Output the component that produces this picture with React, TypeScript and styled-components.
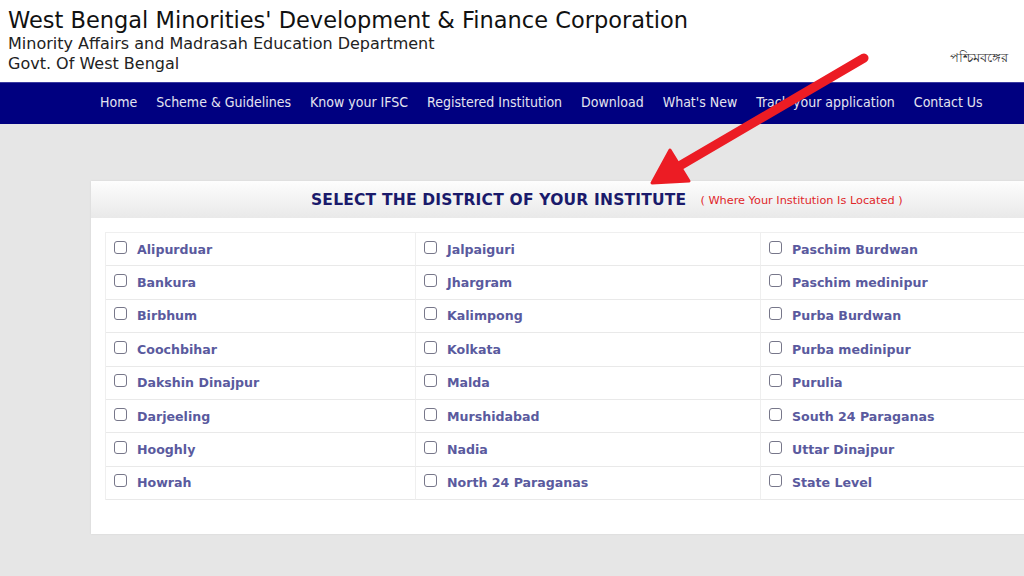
import React from "react";
import styled, { createGlobalStyle } from "styled-components";

const GlobalStyle = createGlobalStyle`
  html, body { margin: 0; padding: 0; overflow: hidden; background: #e6e6e6; }
  body { width: 1024px; height: 576px; font-family: "DejaVu Sans", Verdana, sans-serif; }
  #root { width: 1024px; height: 576px; overflow: hidden; }
`;

const Page = styled.div`
  position: relative;
  width: 1140px;
  height: 576px;
  background: #e6e6e6;
`;

const Header = styled.header`
  height: 82px;
  background: #ffffff;
  display: flex;
  justify-content: space-between;
  align-items: flex-start;
  padding: 0 0 0 8px;
  box-sizing: border-box;
`;

const Brand = styled.div`
  display: flex;
  flex-direction: column;
  padding-top: 6px;
`;

const Title = styled.h1`
  margin: 0;
  font-family: "DejaVu Sans", Verdana, sans-serif;
  font-weight: normal;
  font-size: 22.5px;
  line-height: 28px;
  color: #111;
`;

const SubLine = styled.div`
  font-family: "DejaVu Sans", Verdana, sans-serif;
  font-size: 16px;
  line-height: 20px;
  color: #222;
`;

const Tagline = styled.div`
  margin-top: 48px;
  width: 190px;
  font-family: "Noto Sans", "DejaVu Sans", sans-serif;
  font-size: 13px;
  color: #333;
  white-space: nowrap;
`;

const Nav = styled.nav`
  height: 42px;
  background: #000080;
  border-top: 1px solid #3a3aa0;
  box-sizing: border-box;
  display: flex;
  align-items: center;
  gap: 19px;
  padding: 0 0 3px 100px;
`;

const NavLink = styled.a`
  font-family: "DejaVu Sans Condensed", "DejaVu Sans", sans-serif;
  font-size: 14px;
  color: #e4e4f0;
  text-decoration: none;
  white-space: nowrap;
`;

const Panel = styled.section`
  margin: 57px 0 0 91px;
  width: 1000px;
  background: #ffffff;
  box-shadow: 0 0 2px rgba(0, 0, 0, 0.08);
`;

const PanelHead = styled.div`
  height: 37px;
  background: linear-gradient(#fdfdfd, #e9e9e9);
  display: flex;
  align-items: center;
  padding-left: 220px;
  gap: 14px;
`;

const PanelTitle = styled.h2`
  margin: 0;
  font-family: "DejaVu Sans", Verdana, sans-serif;
  font-weight: bold;
  font-size: 15.5px;
  letter-spacing: 0.2px;
  color: #1a1a6b;
`;

const Note = styled.span`
  font-family: "DejaVu Sans", Verdana, sans-serif;
  font-size: 11.3px;
  color: #e0262a;
  margin-top: 2px;
`;

const PanelBody = styled.div`
  padding: 14px 0 34px 14px;
`;

const Grid = styled.div`
  display: grid;
  grid-template-columns: 310px 345px 345px;
  grid-auto-rows: 33.4px;
  border-top: 1px solid #efefef;
  border-left: 1px solid #efefef;
`;

const Cell = styled.label`
  display: flex;
  align-items: center;
  gap: 10px;
  padding-left: 8px;
  border-right: 1px solid #efefef;
  border-bottom: 1px solid #e9e9e9;
  box-sizing: border-box;
  font-family: "DejaVu Sans", Verdana, sans-serif;
  font-weight: bold;
  font-size: 12.6px;
  color: #5a5a9e;
  white-space: nowrap;
`;

const Box = styled.span`
  width: 11px;
  height: 11px;
  border: 1.5px solid #77778a;
  border-radius: 3px;
  margin-top: -4px;
  flex: none;
`;

const Arrow = styled.svg`
  position: absolute;
  left: 0;
  top: 0;
  pointer-events: none;
`;

const navItems = [
  "Home",
  "Scheme & Guidelines",
  "Know your IFSC",
  "Registered Institution",
  "Download",
  "What's New",
  "Track your application",
  "Contact Us",
];

const columns = [
  ["Alipurduar", "Bankura", "Birbhum", "Coochbihar", "Dakshin Dinajpur", "Darjeeling", "Hooghly", "Howrah"],
  ["Jalpaiguri", "Jhargram", "Kalimpong", "Kolkata", "Malda", "Murshidabad", "Nadia", "North 24 Paraganas"],
  ["Paschim Burdwan", "Paschim medinipur", "Purba Burdwan", "Purba medinipur", "Purulia", "South 24 Paraganas", "Uttar Dinajpur", "State Level"],
];

export default function App() {
  const cells: string[] = [];
  for (let r = 0; r < 8; r++) for (let c = 0; c < 3; c++) cells.push(columns[c][r]);
  return (
    <Page>
      <GlobalStyle />
      <Header>
        <Brand>
          <Title>West Bengal Minorities' Development &amp; Finance Corporation</Title>
          <SubLine>Minority Affairs and Madrasah Education Department</SubLine>
          <SubLine>Govt. Of West Bengal</SubLine>
        </Brand>
        <Tagline>পশ্চিমবঙ্গের</Tagline>
      </Header>
      <Nav>
        {navItems.map((n) => (
          <NavLink key={n}>{n}</NavLink>
        ))}
      </Nav>
      <Panel>
        <PanelHead>
          <PanelTitle>SELECT THE DISTRICT OF YOUR INSTITUTE</PanelTitle>
          <Note>( Where Your Institution Is Located )</Note>
        </PanelHead>
        <PanelBody>
          <Grid>
            {cells.map((c) => (
              <Cell key={c}>
                <Box />
                {c}
              </Cell>
            ))}
          </Grid>
        </PanelBody>
      </Panel>
      <Arrow width="1024" height="576" viewBox="0 0 1024 576">
        <line x1="864" y1="58" x2="676" y2="168" stroke="#ec1c24" strokeWidth="9" strokeLinecap="round" />
        <polygon points="652,183 670,150 689,181" fill="#ec1c24" stroke="#ec1c24" strokeWidth="3" strokeLinejoin="round" />
      </Arrow>
    </Page>
  );
}
